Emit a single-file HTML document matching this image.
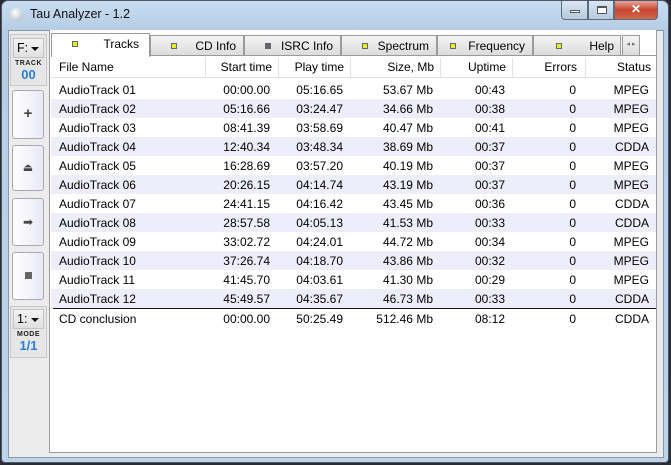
<!DOCTYPE html>
<html><head><style>
*{margin:0;padding:0;box-sizing:border-box}
body{width:671px;height:465px;background:#2a2b33;font-family:"Liberation Sans",sans-serif;font-size:12px;color:#000;position:relative;overflow:hidden}
.frame{position:absolute;left:1px;top:0;width:668px;height:463px;border-radius:7px 7px 4px 4px;background:linear-gradient(#c9dcef,#b4cde6 30px,#bcd3ea);border:1px solid #4e5866}
.title{position:absolute;left:30px;top:7px;font-size:12.5px;color:#111}
.orb{position:absolute;left:10px;top:8px;width:13px;height:13px;border-radius:50%;background:radial-gradient(circle at 40% 35%,#fff,#c9d2dc 60%,#9aa6b3)}
.ctl{position:absolute;top:1px;height:19px;border:1px solid #5d6a7a;border-top:none}
.client{position:absolute;left:8px;top:30px;width:656px;height:428px;background:#ececec;border:1px solid #8a97a6}
.abs{position:absolute}
.main{position:absolute;left:49px;top:30px;width:608px;height:423px;background:#fff;border:1px solid #9b9b9b;border-top:none}
.tab{position:absolute;top:35px;height:21px;background:linear-gradient(#f4f4f4,#dcdcdc);border:1px solid #9a9a9a;font-size:12px;text-align:right;padding:3px 7px 0 0}
.tab i{position:absolute;left:20px;top:7px;width:6px;height:6px;background:#e6f01a;border:1px solid #667}
.tab.act{top:33px;height:24px;background:#fff;border-bottom:none;z-index:2}
.hdr{position:absolute;left:51px;top:57px;width:605px;height:21px;border-bottom:1px solid #e2e2e2;background:#fff}
.hdr span,.row span{position:absolute;top:3px;white-space:nowrap}
.sep{position:absolute;top:0;width:1px;height:21px;background:#e3e3e3}
.row{position:absolute;left:51px;width:605px;height:19px}
.alt{background:#eeeefa}
.btn{position:absolute;left:12px;width:32px;border:1px solid #a8a8b8;border-radius:3px;background:linear-gradient(90deg,#fff,#e9e9f6);text-align:center}
.combo{position:absolute;left:13px;width:31px;height:20px;background:linear-gradient(#f4f4f4,#e0e0e0);border:1px solid #c4c4c4;font-size:12.5px;padding:2px 0 0 3px}
.combo b{position:absolute;right:4px;top:8px;border:4px solid transparent;border-top:4px solid #111;border-bottom:none}
.lbl{position:absolute;left:12px;width:33px;text-align:center;font-size:7px;font-weight:bold;letter-spacing:.5px;color:#222}
.num{position:absolute;left:12px;width:33px;text-align:center;font-size:13px;font-weight:bold;color:#2a7ed8}
</style></head><body>
<div class="frame"></div>
<div class="orb"></div>
<div class="title">Tau Analyzer - 1.2</div>
<div class="ctl" style="left:561px;width:27px;border-radius:0 0 0 4px;background:linear-gradient(#dbe6f2,#b5c9de)"><div class="abs" style="left:8px;top:9px;width:10px;height:3px;border:1px solid #555;background:#fff"></div></div>
<div class="ctl" style="left:588px;width:26px;background:linear-gradient(#dbe6f2,#b5c9de)"><div class="abs" style="left:8px;top:5px;width:10px;height:8px;border:1px solid #555;border-top-width:2px;background:#fff"></div></div>
<div class="ctl" style="left:614px;width:44px;border-radius:0 0 4px 0;background:linear-gradient(#e8a597,#c8452f 50%,#d06a50);color:#fff;font-weight:bold;text-align:center;font-size:12px;line-height:17px">✕</div>
<div class="client"></div>
<div class="abs" style="left:10px;top:34px;width:37px;height:52px;border:1px solid #c8c8c8;background:#e6e6e6"></div>
<div class="combo" style="top:38px">F:<b></b></div>
<div class="lbl" style="top:60px">TRACK</div>
<div class="num" style="top:67px">00</div>
<div class="btn" style="top:90px;height:49px;line-height:46px;font-weight:bold;font-size:15px;color:#444">+</div>
<div class="btn" style="top:145px;height:46px;line-height:44px;font-size:11px;color:#444">⏏</div>
<div class="btn" style="top:198px;height:48px;line-height:46px;font-size:12px;color:#444">➡</div>
<div class="btn" style="top:252px;height:48px"><div class="abs" style="left:12px;top:19px;width:7px;height:7px;background:#666"></div></div>
<div class="abs" style="left:10px;top:306px;width:37px;height:52px;border:1px solid #c8c8c8;background:#e6e6e6"></div>
<div class="combo" style="top:309px">1:<b></b></div>
<div class="lbl" style="top:331px">MODE</div>
<div class="num" style="top:338px">1/1</div>

<div class="main"></div>
<div class="tab act" style="left:51px;width:99px;padding-right:10px">Tracks<i></i></div>
<div class="tab" style="left:150px;width:94px">CD Info<i></i></div>
<div class="tab" style="left:244px;width:97px">ISRC Info<i style="background:#666"></i></div>
<div class="tab" style="left:341px;width:96px">Spectrum<i></i></div>
<div class="tab" style="left:437px;width:96px">Frequency<i style="left:12px"></i></div>
<div class="tab" style="left:533px;width:88px;padding-right:6px">Help<i style="left:22px"></i></div>
<div class="tab" style="left:622px;width:18px;padding:0;text-align:center;font-size:7px;line-height:18px;color:#777">◂ ▸</div>
<div class="abs" style="left:51px;top:55px;width:605px;height:1px;background:#9a9a9a"></div>
<div class="abs" style="left:52px;top:55px;width:97px;height:2px;background:#fff;z-index:3"></div>
<div class="hdr">
<span style="left:8px">File Name</span>
<div class="sep" style="left:154px"></div><span style="right:384px">Start time</span>
<div class="sep" style="left:227px"></div><span style="right:312px">Play time</span>
<div class="sep" style="left:299px"></div><span style="right:222px">Size, Mb</span>
<div class="sep" style="left:389px"></div><span style="right:150px">Uptime</span>
<div class="sep" style="left:461px"></div><span style="right:79px">Errors</span>
<div class="sep" style="left:534px"></div><span style="right:5px">Status</span>
</div>
<div class="row" style="top:80px"><span style="left:8px">AudioTrack 01</span><span style="right:386px">00:00.00</span><span style="right:313px">05:16.65</span><span style="right:223px">53.67 Mb</span><span style="right:151px">00:43</span><span style="right:80px">0</span><span style="right:7px">MPEG</span></div>
<div class="row alt" style="top:99px"><span style="left:8px">AudioTrack 02</span><span style="right:386px">05:16.66</span><span style="right:313px">03:24.47</span><span style="right:223px">34.66 Mb</span><span style="right:151px">00:38</span><span style="right:80px">0</span><span style="right:7px">MPEG</span></div>
<div class="row" style="top:118px"><span style="left:8px">AudioTrack 03</span><span style="right:386px">08:41.39</span><span style="right:313px">03:58.69</span><span style="right:223px">40.47 Mb</span><span style="right:151px">00:41</span><span style="right:80px">0</span><span style="right:7px">MPEG</span></div>
<div class="row alt" style="top:137px"><span style="left:8px">AudioTrack 04</span><span style="right:386px">12:40.34</span><span style="right:313px">03:48.34</span><span style="right:223px">38.69 Mb</span><span style="right:151px">00:37</span><span style="right:80px">0</span><span style="right:7px">CDDA</span></div>
<div class="row" style="top:156px"><span style="left:8px">AudioTrack 05</span><span style="right:386px">16:28.69</span><span style="right:313px">03:57.20</span><span style="right:223px">40.19 Mb</span><span style="right:151px">00:37</span><span style="right:80px">0</span><span style="right:7px">MPEG</span></div>
<div class="row alt" style="top:175px"><span style="left:8px">AudioTrack 06</span><span style="right:386px">20:26.15</span><span style="right:313px">04:14.74</span><span style="right:223px">43.19 Mb</span><span style="right:151px">00:37</span><span style="right:80px">0</span><span style="right:7px">MPEG</span></div>
<div class="row" style="top:194px"><span style="left:8px">AudioTrack 07</span><span style="right:386px">24:41.15</span><span style="right:313px">04:16.42</span><span style="right:223px">43.45 Mb</span><span style="right:151px">00:36</span><span style="right:80px">0</span><span style="right:7px">CDDA</span></div>
<div class="row alt" style="top:213px"><span style="left:8px">AudioTrack 08</span><span style="right:386px">28:57.58</span><span style="right:313px">04:05.13</span><span style="right:223px">41.53 Mb</span><span style="right:151px">00:33</span><span style="right:80px">0</span><span style="right:7px">CDDA</span></div>
<div class="row" style="top:232px"><span style="left:8px">AudioTrack 09</span><span style="right:386px">33:02.72</span><span style="right:313px">04:24.01</span><span style="right:223px">44.72 Mb</span><span style="right:151px">00:34</span><span style="right:80px">0</span><span style="right:7px">MPEG</span></div>
<div class="row alt" style="top:251px"><span style="left:8px">AudioTrack 10</span><span style="right:386px">37:26.74</span><span style="right:313px">04:18.70</span><span style="right:223px">43.86 Mb</span><span style="right:151px">00:32</span><span style="right:80px">0</span><span style="right:7px">MPEG</span></div>
<div class="row" style="top:270px"><span style="left:8px">AudioTrack 11</span><span style="right:386px">41:45.70</span><span style="right:313px">04:03.61</span><span style="right:223px">41.30 Mb</span><span style="right:151px">00:29</span><span style="right:80px">0</span><span style="right:7px">MPEG</span></div>
<div class="row alt" style="top:289px"><span style="left:8px">AudioTrack 12</span><span style="right:386px">45:49.57</span><span style="right:313px">04:35.67</span><span style="right:223px">46.73 Mb</span><span style="right:151px">00:33</span><span style="right:80px">0</span><span style="right:7px">CDDA</span></div>
<div class="abs" style="left:53px;top:308px;width:603px;height:1px;background:#111"></div>
<div class="row" style="top:309px"><span style="left:8px">CD conclusion</span><span style="right:386px">00:00.00</span><span style="right:313px">50:25.49</span><span style="right:223px">512.46 Mb</span><span style="right:151px">08:12</span><span style="right:80px">0</span><span style="right:7px">CDDA</span></div>
</body></html>
